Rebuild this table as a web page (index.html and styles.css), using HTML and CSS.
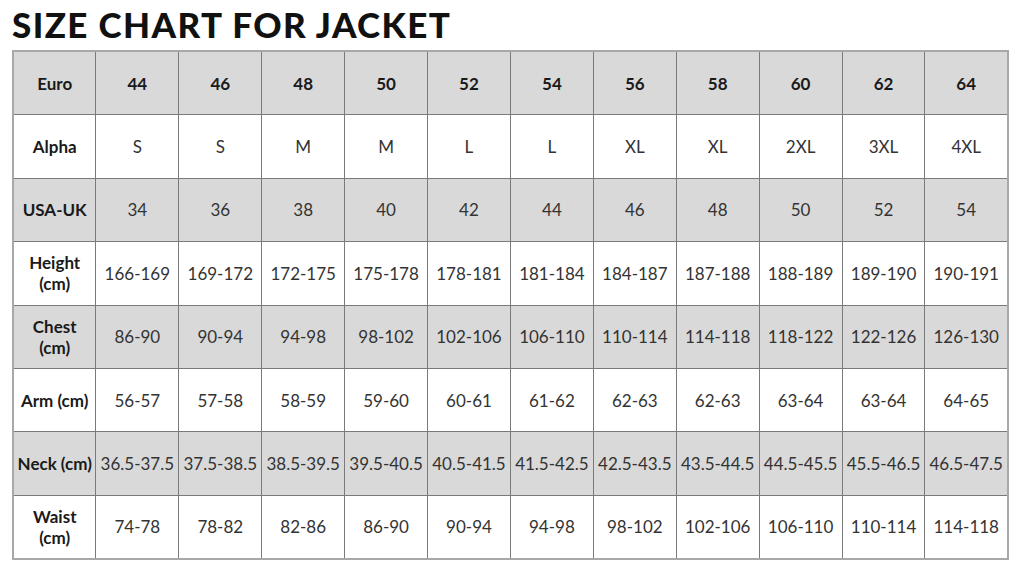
FILE: index.html
```html
<!DOCTYPE html>
<html>
<head>
<meta charset="utf-8">
<link rel="stylesheet" href="styles.css">
</head>
<body>
<div class="page">
  <h1 class="title">SIZE CHART FOR JACKET</h1>
  <table class="chart">
    <tr class="shade head">
      <th>Euro</th><td>44</td><td>46</td><td>48</td><td>50</td><td>52</td><td>54</td><td>56</td><td>58</td><td>60</td><td>62</td><td>64</td>
    </tr>
    <tr>
      <th>Alpha</th><td>S</td><td>S</td><td>M</td><td>M</td><td>L</td><td>L</td><td>XL</td><td>XL</td><td>2XL</td><td>3XL</td><td>4XL</td>
    </tr>
    <tr class="shade">
      <th>USA-UK</th><td>34</td><td>36</td><td>38</td><td>40</td><td>42</td><td>44</td><td>46</td><td>48</td><td>50</td><td>52</td><td>54</td>
    </tr>
    <tr>
      <th>Height<br>(cm)</th><td>166-169</td><td>169-172</td><td>172-175</td><td>175-178</td><td>178-181</td><td>181-184</td><td>184-187</td><td>187-188</td><td>188-189</td><td>189-190</td><td>190-191</td>
    </tr>
    <tr class="shade">
      <th>Chest<br>(cm)</th><td>86-90</td><td>90-94</td><td>94-98</td><td>98-102</td><td>102-106</td><td>106-110</td><td>110-114</td><td>114-118</td><td>118-122</td><td>122-126</td><td>126-130</td>
    </tr>
    <tr>
      <th>Arm (cm)</th><td>56-57</td><td>57-58</td><td>58-59</td><td>59-60</td><td>60-61</td><td>61-62</td><td>62-63</td><td>62-63</td><td>63-64</td><td>63-64</td><td>64-65</td>
    </tr>
    <tr class="shade">
      <th>Neck (cm)</th><td>36.5-37.5</td><td>37.5-38.5</td><td>38.5-39.5</td><td>39.5-40.5</td><td>40.5-41.5</td><td>41.5-42.5</td><td>42.5-43.5</td><td>43.5-44.5</td><td>44.5-45.5</td><td>45.5-46.5</td><td>46.5-47.5</td>
    </tr>
    <tr>
      <th>Waist<br>(cm)</th><td>74-78</td><td>78-82</td><td>82-86</td><td>86-90</td><td>90-94</td><td>94-98</td><td>98-102</td><td>102-106</td><td>106-110</td><td>110-114</td><td>114-118</td>
    </tr>
  </table>
</div>
</body>
</html>
```

FILE: styles.css
```css
html, body {
  margin: 0;
  padding: 0;
  background: #ffffff;
}
.page {
  padding: 4px 0 0 12px;
  font-family: Lato, "Open Sans", sans-serif;
}
.title {
  margin: 0 0 6px 0;
  font-size: 35px;
  line-height: 40px;
  font-weight: 900;
  color: #111111;
  letter-spacing: 1.4px;
}
.chart {
  border-collapse: collapse;
  table-layout: fixed;
  width: 997px;
  border: 2px solid #a8a8a8;
}
.chart th, .chart td {
  height: 62.4px;
  padding: 0;
  text-align: center;
  vertical-align: middle;
  border: 1px solid #7a7a7a;
  font-size: 17px;
  line-height: 21px;
  color: #333333;
  white-space: nowrap;
}
.chart th {
  font-weight: 700;
  color: #1a1a1a;
}
.chart .head td {
  font-weight: 700;
  color: #1a1a1a;
}
.chart .shade th, .chart .shade td {
  background: #d9d9d9;
}
.chart tr:first-child th, .chart tr:first-child td { border-top-color: #a8a8a8; }
.chart tr:last-child th, .chart tr:last-child td { border-bottom-color: #a8a8a8; }
.chart th:first-child { border-left-color: #a8a8a8; }
.chart td:last-child { border-right-color: #a8a8a8; }
```
